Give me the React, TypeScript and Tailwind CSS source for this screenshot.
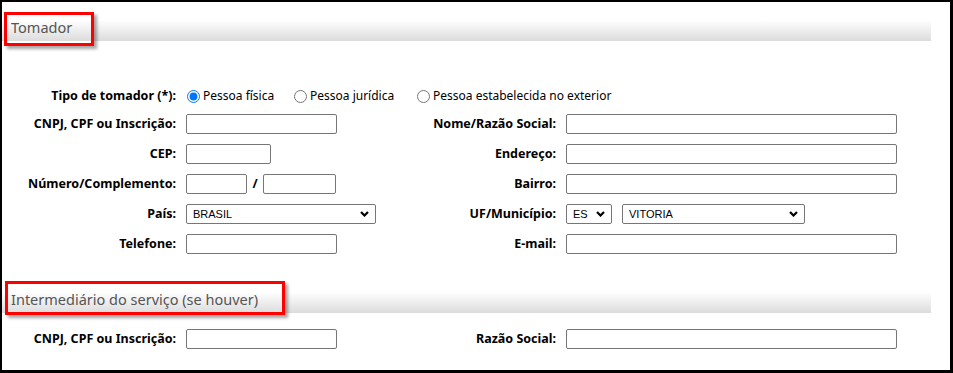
import React from 'react';

const labelCls = 'shrink-0 text-right font-bold text-[12.5px] text-black';
const inputCls = 'h-[20px] border border-[#767676] rounded-[2px] bg-white';

function Chevron() {
  return (
    <svg width="9" height="6" viewBox="0 0 9 6" className="shrink-0">
      <polyline points="1,1 4.5,4.5 8,1" fill="none" stroke="#000" strokeWidth="2.2" />
    </svg>
  );
}

function FakeSelect({ value, width }: { value: string; width: string }) {
  return (
    <div className={`${inputCls} ${width} flex items-center justify-between pl-[6px] pr-[6px]`}>
      <span className="font-['Liberation_Sans',Arial,sans-serif] text-[11px] text-black">{value}</span>
      <Chevron />
    </div>
  );
}

function SectionBar({ title }: { title: string }) {
  return (
    <div className="h-[21px] w-[929px] bg-gradient-to-b from-white to-[#dcdcdc] pl-[9px]">
      <span className="block text-[14.5px] leading-[15px] text-[#555]">{title}</span>
    </div>
  );
}

function Row({
  left,
  leftField,
  right,
  rightField,
}: {
  left: string;
  leftField: React.ReactNode;
  right: string;
  rightField: React.ReactNode;
}) {
  return (
    <div className="flex h-[30px] items-center">
      <div className={`${labelCls} w-[174px]`}>{left}</div>
      <div className="flex w-[224px] shrink-0 items-center pl-[10px]">{leftField}</div>
      <div className={`${labelCls} w-[156px]`}>{right}</div>
      <div className="flex items-center pl-[10px]">{rightField}</div>
    </div>
  );
}

function Radio({ label, checked, width }: { label: string; checked?: boolean; width: string }) {
  return (
    <label className={`flex shrink-0 items-center ${width}`}>
      <input type="radio" name="tipo" defaultChecked={checked} className="m-0 h-[13px] w-[13px]" />
      <span className="ml-[3px] text-[12px] text-black">{label}</span>
    </label>
  );
}

export default function App() {
  return (
    <div className="relative h-[373px] w-[953px] border-t-2 border-l-2 border-r-[3px] border-b-[3px] border-black bg-white font-['Noto_Sans',sans-serif]">
      {/* Tomador */}
      <div className="pt-[18px]">
        <SectionBar title="Tomador" />
      </div>

      <div className="mt-[40px]">
        <div className="flex h-[28px] items-center pt-[2px]">
          <div className={`${labelCls} w-[174px]`}>Tipo de tomador (*):</div>
          <div className="flex items-center pl-[11px]">
            <Radio label="Pessoa física" checked width="w-[107px]" />
            <Radio label="Pessoa jurídica" width="w-[123px]" />
            <Radio label="Pessoa estabelecida no exterior" width="w-[220px]" />
          </div>
        </div>

        <Row
          left="CNPJ, CPF ou Inscrição:"
          leftField={<input className={`${inputCls} w-[151px]`} />}
          right="Nome/Razão Social:"
          rightField={<input className={`${inputCls} w-[331px]`} />}
        />
        <Row
          left="CEP:"
          leftField={<input className={`${inputCls} w-[85px]`} />}
          right="Endereço:"
          rightField={<input className={`${inputCls} w-[331px]`} />}
        />
        <Row
          left="Número/Complemento:"
          leftField={
            <>
              <input className={`${inputCls} w-[61px]`} />
              <span className="w-[16px] text-center text-[12.5px] font-bold text-black">/</span>
              <input className={`${inputCls} w-[73px]`} />
            </>
          }
          right="Bairro:"
          rightField={<input className={`${inputCls} w-[331px]`} />}
        />
        <Row
          left="País:"
          leftField={<FakeSelect value="BRASIL" width="w-[190px]" />}
          right="UF/Município:"
          rightField={
            <>
              <FakeSelect value="ES" width="w-[46px]" />
              <div className="w-[10px]" />
              <FakeSelect value="VITORIA" width="w-[183px]" />
            </>
          }
        />
        <Row
          left="Telefone:"
          leftField={<input className={`${inputCls} w-[151px]`} />}
          right="E-mail:"
          rightField={<input className={`${inputCls} w-[331px]`} />}
        />
      </div>

      {/* Intermediário */}
      <div className="mt-[33px]">
        <SectionBar title="Intermediário do serviço (se houver)" />
      </div>

      <div className="mt-[11px]">
        <Row
          left="CNPJ, CPF ou Inscrição:"
          leftField={<input className={`${inputCls} w-[151px]`} />}
          right="Razão Social:"
          rightField={<input className={`${inputCls} w-[331px]`} />}
        />
      </div>

      {/* red highlight boxes */}
      <div className="absolute left-[2px] top-[10px] h-[34px] w-[90px] border-[3px] border-[#f00] shadow-[3px_3px_3px_rgba(0,0,0,0.35)]" />
      <div className="absolute left-[3px] top-[279px] h-[34px] w-[280px] border-[3px] border-[#f00] shadow-[3px_3px_3px_rgba(0,0,0,0.35)]" />
    </div>
  );
}
